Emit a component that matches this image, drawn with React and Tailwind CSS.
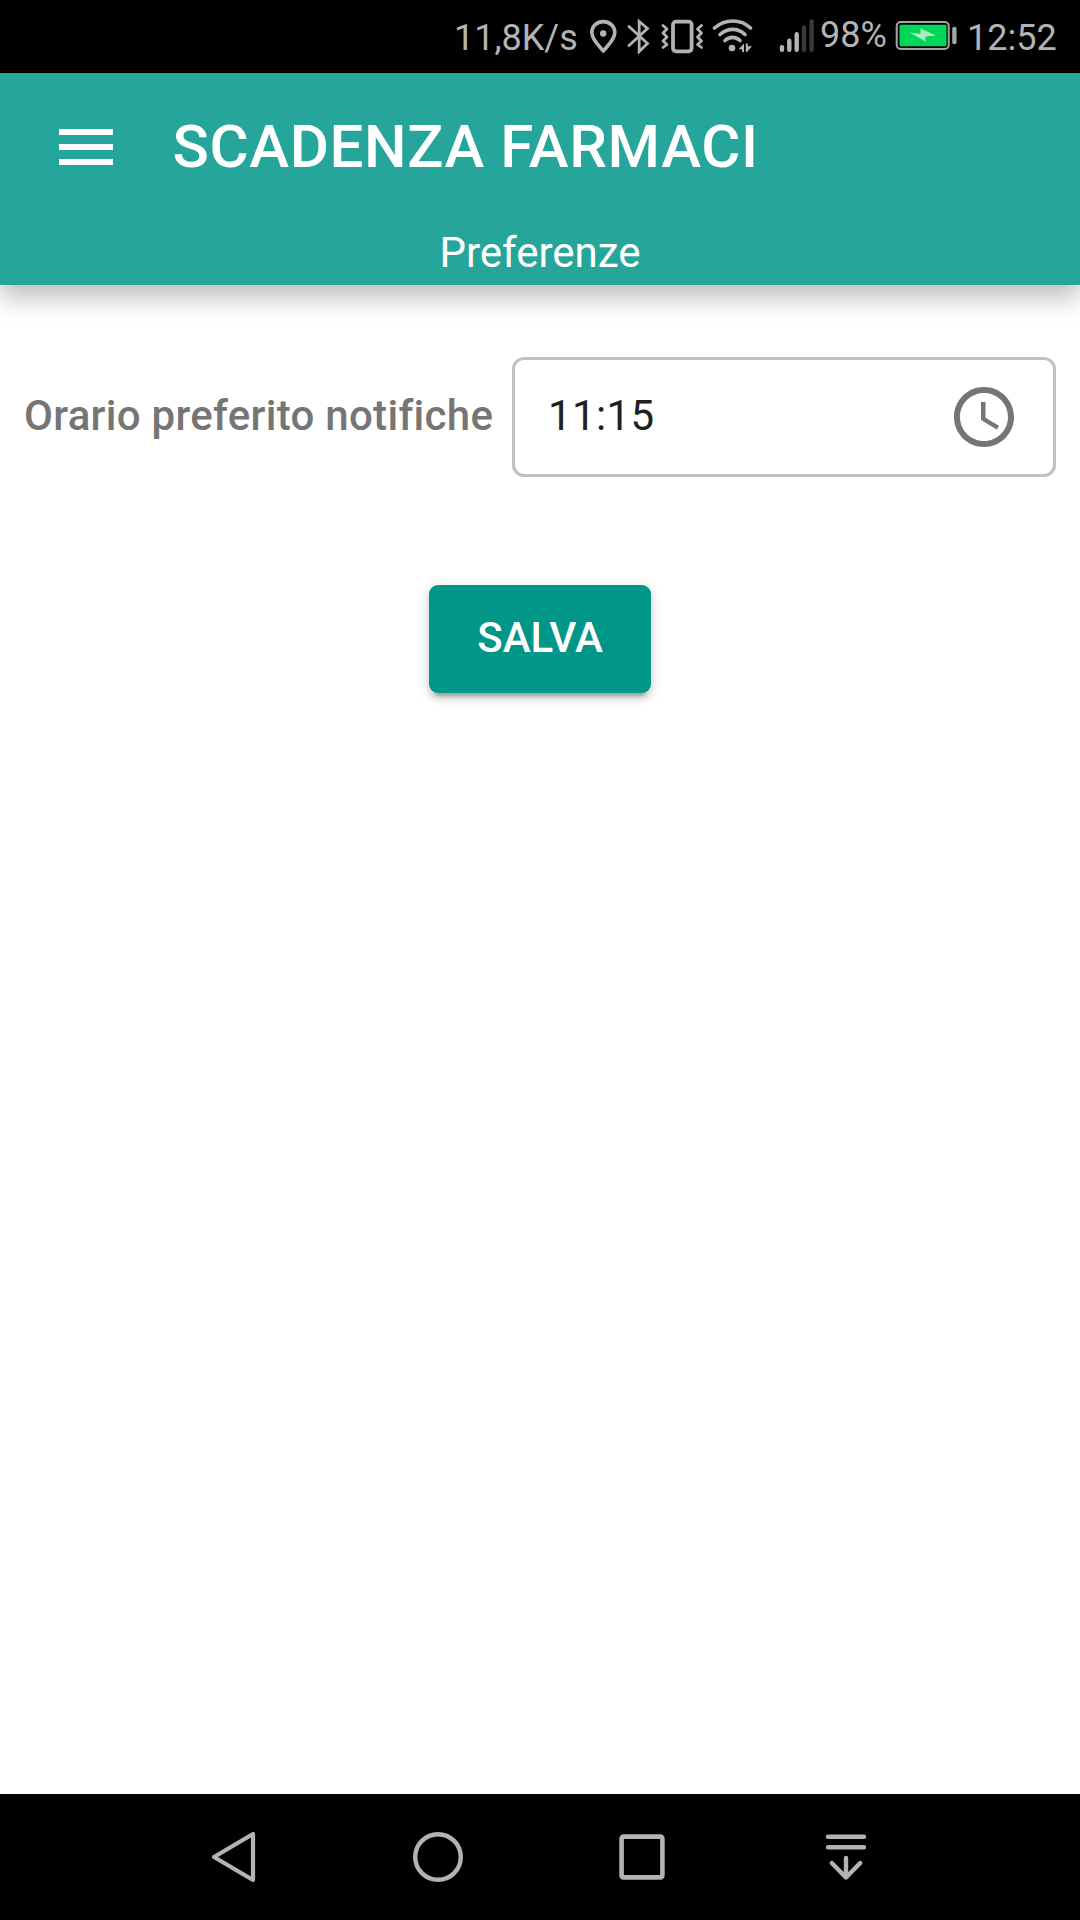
import React, { useState } from 'react';

const StatusBar = () => (
  <div className="flex h-[73px] items-start bg-black pt-[18px] text-[36px] leading-9 text-[#b3b3b3]">
    <span className="ml-[454px] w-[136px] whitespace-nowrap pt-[2px]">11,8K/s</span>

    {/* location */}
    <svg className="h-9 w-[27px]" viewBox="0 0 27 36" fill="none" stroke="currentColor" strokeWidth="3.6">
      <path d="M13.3 33C10 28.500 1.800 22 1.800 14.500C1.800 8 7 3.600 13.300 3.600S24.800 8 24.800 14.500C24.800 22 16.600 28.500 13.300 33Z" strokeLinejoin="round" />
      <circle cx="13.2" cy="15.5" r="3.2" fill="currentColor" stroke="none" />
    </svg>

    {/* bluetooth */}
    <svg className="ml-2.5 h-9 w-6" viewBox="0 0 24 36" fill="none" stroke="currentColor" strokeWidth="2.8">
      <path d="M2 8.500L20.500 25.500L12.200 33.500V3.500L20.500 10.500L2 27.500" strokeLinecap="round" strokeLinejoin="miter" />
    </svg>

    {/* vibration */}
    <svg className="ml-[9px] h-9 w-11" viewBox="0 0 44 36" fill="none" stroke="currentColor" strokeLinecap="round" strokeLinejoin="round">
      <rect x="13" y="3.700" width="18.600" height="29.600" rx="3" strokeWidth="3.800" />
      <path d="M3 7.500L7 11L3 15L7 19L3 23L7 26.500L3 29.500" strokeWidth="2.800" />
      <path d="M41.500 7.500L37.500 11L41.500 15L37.500 19L41.500 23L37.500 26.500L41.500 29.500" strokeWidth="2.800" />
    </svg>

    {/* wifi */}
    <svg className="ml-2 h-9 w-[42px]" viewBox="0 0 42 36" fill="none" stroke="currentColor" strokeWidth="3.600" strokeLinecap="round">
      <path d="M2.500 10C13 .7 28.500 .7 38.500 10" />
      <path d="M8 16.500C15.500 9.700 26 9.700 33 16.500" />
      <path d="M13 22.500C17.500 18.300 23.500 18.300 28 22.500" />
      <circle cx="20" cy="30" r="3.300" fill="currentColor" stroke="none" />
      <path d="M32 25.500L26.500 31.200H30V34H32ZM33.800 25.500H35.800V28.200H40L35 34H33.800Z" fill="currentColor" stroke="none" />
    </svg>

    {/* mobile signal */}
    <svg className="ml-[25px] h-9 w-9" viewBox="0 0 36 36" strokeWidth="4.400" strokeLinecap="round">
      <path d="M3 29.200V31.800M10.300 22.800V31.800M17.700 16.200V31.800" stroke="currentColor" />
      <path d="M25 9.400V31.800M32.600 3.400V31.800" stroke="#3a3a3a" />
    </svg>

    <span className="-mt-px ml-[5px] w-[75px] whitespace-nowrap">98%</span>

    {/* battery */}
    <svg className="h-9 w-[62px]" viewBox="0 0 62 36">
      <rect x="1.700" y="4" width="52" height="27" rx="4" fill="none" stroke="#a5a5a5" strokeWidth="2" />
      <rect x="4.500" y="6.800" width="47" height="21.400" rx="1" fill="#00d75a" />
      <path d="M14.500 14.500L25.500 16V10.500L41 17.500L30.500 18.500V23.500Z" fill="#a6f0c0" />
      <rect x="57.200" y="8.800" width="4.400" height="17.500" rx="2" fill="#a5a5a5" />
    </svg>

    <span className="ml-2.5 whitespace-nowrap pt-[2px]">12:52</span>
  </div>
);

const Header = () => (
  <header className="h-[212px] bg-[#26a69a] text-white shadow-[0_12px_24px_0_rgba(0,0,0,0.27)]">
    <div className="flex h-[147px] items-center pl-[50px]">
      <button className="size-[72px]" aria-label="Menu">
        <svg className="size-[72px]" viewBox="0 0 24 24" fill="currentColor">
          <path d="M3 18h18v-2H3v2zm0-5h18v-2H3v2zm0-7v2h18V6H3z" />
        </svg>
      </button>
      <h1 className="ml-[50.5px] text-[60px] font-medium leading-[96px] tracking-[0.0105em]">
        SCADENZA FARMACI
      </h1>
    </div>
    <p className="mt-[3px] text-center text-[42px] leading-[60px]">Preferenze</p>
  </header>
);

const TimeField = ({ value, onChange }) => (
  <div className="flex h-[120px] w-[544px] items-center justify-between rounded-xl border-[3px] border-[#c1c1c1] pl-[33px] pr-[33px]">
    <input
      value={value}
      onChange={(e) => onChange(e.target.value)}
      className="w-[300px] bg-transparent pb-[2px] text-[42px] leading-[60px] tracking-[0.00938em] text-[#212121] outline-none"
    />
    <svg className="size-[72px] text-[#757575]" viewBox="0 0 24 24" fill="currentColor">
      <path d="M11.990 2C6.470 2 2 6.480 2 12s4.470 10 9.990 10C17.520 22 22 17.520 22 12S17.520 2 11.990 2zM12 20c-4.420 0-8-3.580-8-8s3.580-8 8-8 8 3.580 8 8-3.580 8-8 8z" />
      <path d="M12.500 7H11v6l5.250 3.150.75-1.230-4.500-2.670z" />
    </svg>
  </div>
);

const NavBar = () => (
  <nav className="flex h-[126px] items-center bg-black px-[132px] text-[#b3b3b3]">
    <button className="flex w-[204px] justify-center" aria-label="Indietro">
      <svg className="size-[60px]" viewBox="0 0 60 60" fill="none" stroke="currentColor" strokeWidth="4.200" strokeLinejoin="round">
        <path d="M10 30L49 7V53Z" />
      </svg>
    </button>
    <button className="flex w-[204px] justify-center" aria-label="Home">
      <svg className="size-[60px]" viewBox="0 0 60 60" fill="none" stroke="currentColor" strokeWidth="4.400">
        <circle cx="30" cy="30" r="22.800" />
      </svg>
    </button>
    <button className="flex w-[204px] justify-center" aria-label="Recenti">
      <svg className="size-[60px]" viewBox="0 0 60 60" fill="none" stroke="currentColor" strokeWidth="4.600">
        <rect x="9.600" y="9.600" width="40.800" height="40.800" rx="2" />
      </svg>
    </button>
    <button className="flex w-[204px] justify-center" aria-label="Notifiche">
      <svg className="size-[60px]" viewBox="0 0 60 60" fill="none" stroke="currentColor" strokeWidth="4.400" strokeLinecap="round" strokeLinejoin="round">
        <path d="M12 9.700H48M12 20.300H48M30 31V50.500M15.800 36L30 50.500L44.200 36" />
      </svg>
    </button>
  </nav>
);

const App = () => {
  const [time, setTime] = useState('11:15');

  return (
    <div className="flex h-[1920px] w-[1080px] flex-col overflow-hidden bg-white font-[Roboto,sans-serif]">
      <StatusBar />
      <Header />
      <main className="flex flex-1 flex-col items-center pt-[72px]">
        <div className="flex w-full items-center justify-between pl-6 pr-6">
          <label className="whitespace-nowrap pb-[2px] text-[42px] font-medium leading-[60px] tracking-[0.00714em] text-[#757575]">
            Orario preferito notifiche
          </label>
          <TimeField value={time} onChange={setTime} />
        </div>
        <button className="mt-[108px] h-[108px] w-[222px] rounded-[9px] bg-[#009688] pb-1 text-[42px] font-medium leading-[73px] text-white shadow-[0_9px_3px_-6px_rgba(0,0,0,0.2),0_6px_6px_0_rgba(0,0,0,0.14),0_3px_15px_0_rgba(0,0,0,0.12)]">
          SALVA
        </button>
      </main>
      <NavBar />
    </div>
  );
};

export default App;
